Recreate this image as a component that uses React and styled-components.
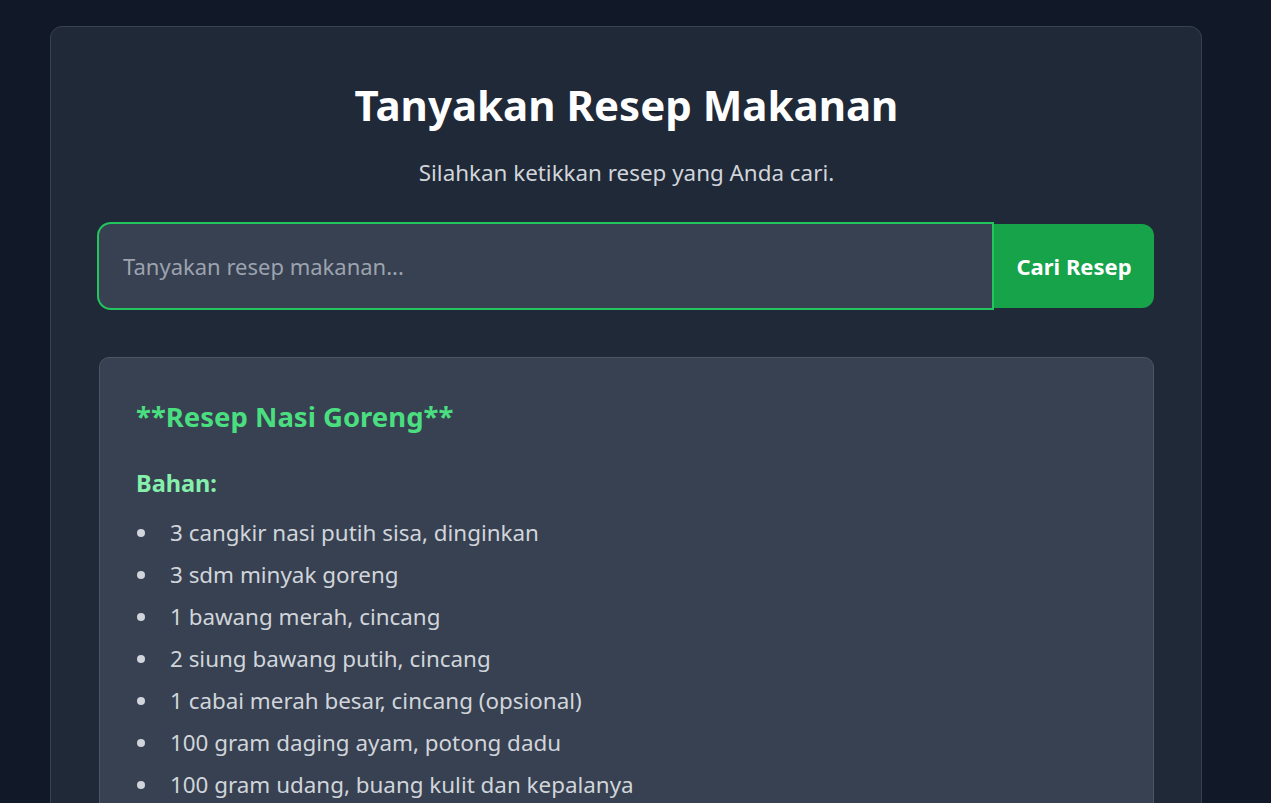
import styled, { createGlobalStyle } from "styled-components";

const GlobalStyle = createGlobalStyle`
  html, body {
    margin: 0;
    padding: 0;
    background: #111827;
    font-family: "Noto Sans", "Open Sans", sans-serif;
    overflow: hidden;
  }
`;

const Page = styled.div`
  min-height: 100vh;
  padding: 26px 0 0 50px;
  box-sizing: border-box;
`;

const Card = styled.div`
  width: 1152px;
  box-sizing: border-box;
  background: #1f2937;
  border: 1px solid #374151;
  border-radius: 12px;
  padding: 48px 47px 48px 48px;
`;

const Title = styled.h1`
  margin: 0;
  text-align: center;
  color: #ffffff;
  font-size: 42px;
  font-weight: 700;
  line-height: 60px;
`;

const Subtitle = styled.p`
  margin: 23px 0 0 0;
  text-align: center;
  color: #d1d5db;
  font-size: 22.4px;
  line-height: 30px;
`;

const SearchRow = styled.form`
  display: flex;
  margin-top: 36px;
`;

const Input = styled.input`
  flex: 1;
  height: 84px;
  box-sizing: border-box;
  background: #374151;
  border: none;
  border-radius: 12px 0 0 12px;
  padding: 0 24px;
  color: #ffffff;
  font-family: inherit;
  font-size: 22px;
  outline: none;
  box-shadow: 0 0 0 2px #22c55e;
  caret-color: #ffffff;

  &::placeholder {
    color: #9ca3af;
  }
`;

const Button = styled.button`
  width: 160px;
  height: 84px;
  margin-left: 2px;
  background: #16a34a;
  color: #ffffff;
  border: none;
  border-radius: 0 12px 12px 0;
  font-family: inherit;
  font-size: 22px;
  font-weight: 700;
`;

const Answer = styled.div`
  margin-top: 49px;
  background: #374151;
  border: 1px solid #4b5563;
  border-radius: 10px;
  padding: 40px 36px 36px 36px;
`;

const RecipeTitle = styled.h2`
  margin: 0;
  color: #4ade80;
  font-size: 27.5px;
  font-weight: 700;
  line-height: 38px;
`;

const Section = styled.h3`
  margin: 31px 0 13px 0;
  color: #86efac;
  font-size: 23.5px;
  font-weight: 700;
  line-height: 32px;
`;

const List = styled.ul`
  margin: 0;
  padding: 0;
  list-style: none;
`;

const Item = styled.li`
  position: relative;
  padding-left: 34px;
  color: #d1d5db;
  font-size: 22.4px;
  line-height: 42px;

  &::before {
    content: "";
    position: absolute;
    left: 1px;
    top: 17px;
    width: 8px;
    height: 8px;
    border-radius: 50%;
    background: #d1d5db;
  }
`;

const bahan = [
  "3 cangkir nasi putih sisa, dinginkan",
  "3 sdm minyak goreng",
  "1 bawang merah, cincang",
  "2 siung bawang putih, cincang",
  "1 cabai merah besar, cincang (opsional)",
  "100 gram daging ayam, potong dadu",
  "100 gram udang, buang kulit dan kepalanya",
];

export default function App() {
  return (
    <Page>
      <GlobalStyle />
      <Card>
        <Title>Tanyakan Resep Makanan</Title>
        <Subtitle>Silahkan ketikkan resep yang Anda cari.</Subtitle>
        <SearchRow onSubmit={(e) => e.preventDefault()}>
          <Input autoFocus placeholder="Tanyakan resep makanan..." />
          <Button type="submit">Cari Resep</Button>
        </SearchRow>
        <Answer>
          <RecipeTitle>**Resep Nasi Goreng**</RecipeTitle>
          <Section>Bahan:</Section>
          <List>
            {bahan.map((b) => (
              <Item key={b}>{b}</Item>
            ))}
          </List>
        </Answer>
      </Card>
    </Page>
  );
}
